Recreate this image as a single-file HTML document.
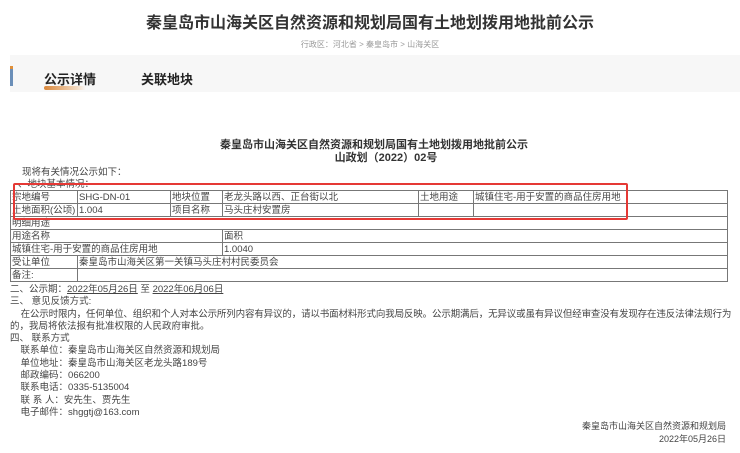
<!DOCTYPE html>
<html><head><meta charset="utf-8"><style>
*{margin:0;padding:0;box-sizing:border-box}
body{width:740px;height:453px;background:#fff;position:relative;overflow:hidden;font-family:"Liberation Sans","Noto Sans CJK SC",sans-serif;color:#333}
.a{position:absolute;white-space:nowrap}
.t{font-size:9.5px;line-height:12px;color:#444}
table{position:absolute;left:10px;top:190px;width:717px;border-collapse:collapse;font-size:9.5px;color:#444;table-layout:fixed}
td{border:1px solid #777;height:13px;line-height:11px;padding:0 1px;white-space:nowrap;overflow:hidden}
u{text-decoration:underline}
</style></head><body>
<div class="a" style="left:0;width:740px;text-align:center;top:9px;font-size:16px;font-weight:bold;color:#333">秦皇岛市山海关区自然资源和规划局国有土地划拨用地批前公示</div>
<div class="a" style="left:0;width:740px;text-align:center;top:39px;font-size:8px;color:#999">行政区：河北省 &gt; 秦皇岛市 &gt; 山海关区</div>
<div class="a" style="left:10px;top:55px;width:730px;height:37px;background:#f7f7f7"></div>
<div class="a" style="left:10px;top:66px;width:3px;height:20px;background:#6b8fb8"></div>
<div class="a" style="left:10px;top:66px;width:3px;height:3px;background:#e0903a"></div>
<div class="a" style="left:44px;top:69px;font-size:13px;font-weight:bold;color:#222">公示详情</div>
<div class="a" style="left:141px;top:69px;font-size:13px;font-weight:bold;color:#222">关联地块</div>
<div class="a" style="left:44px;top:86px;width:42px;height:4px;border-radius:2px;background:linear-gradient(90deg,#d9873a,#f3dcc5 80%,rgba(255,255,255,0))"></div>
<div class="a" style="left:0;width:740px;text-align:center;top:139px;font-size:11px;font-weight:bold;color:#333;line-height:13px;padding-left:8px">秦皇岛市山海关区自然资源和规划局国有土地划拨用地批前公示<br><span style="padding-left:24px">山政划（2022）02号</span></div>
<div class="a t" style="left:22px;top:167px">现将有关情况公示如下：</div>
<div class="a t" style="left:18px;top:179px">、地块基本情况：</div>
<table>
<colgroup><col style="width:67px"><col style="width:93px"><col style="width:52px"><col style="width:196px"><col style="width:55px"><col style="width:254px"></colgroup>
<tr><td>宗地编号</td><td>SHG-DN-01</td><td>地块位置</td><td>老龙头路以西、正台街以北</td><td>土地用途</td><td>城镇住宅-用于安置的商品住房用地</td></tr>
<tr><td>土地面积(公顷)</td><td>1.004</td><td>项目名称</td><td>马头庄村安置房</td><td></td><td></td></tr>
<tr><td colspan="6">明细用途</td></tr>
<tr><td colspan="3">用途名称</td><td colspan="3">面积</td></tr>
<tr><td colspan="3">城镇住宅-用于安置的商品住房用地</td><td colspan="3">1.0040</td></tr>
<tr><td>受让单位</td><td colspan="5">秦皇岛市山海关区第一关镇马头庄村村民委员会</td></tr>
<tr><td>备注:</td><td colspan="5"></td></tr>
</table>
<div class="a" style="left:13px;top:183px;width:615px;height:37px;border:2px solid #e53935;border-radius:2px"></div>
<div class="a t" style="left:10px;top:284px;line-height:12.3px">二、公示期：<u>2022年05月26日</u> 至 <u>2022年06月06日</u><br>三、 意见反馈方式:<br>&nbsp;&nbsp;&nbsp;&nbsp;<span style="letter-spacing:-0.15px">在公示时限内，任何单位、组织和个人对本公示所列内容有异议的，请以书面材料形式向我局反映。公示期满后，无异议或虽有异议但经审查没有发现存在违反法律法规行为</span><br>的，我局将依法报有批准权限的人民政府审批。<br>四、 联系方式<br>&nbsp;&nbsp;&nbsp;&nbsp;联系单位：秦皇岛市山海关区自然资源和规划局<br>&nbsp;&nbsp;&nbsp;&nbsp;单位地址：秦皇岛市山海关区老龙头路189号<br>&nbsp;&nbsp;&nbsp;&nbsp;邮政编码：066200<br>&nbsp;&nbsp;&nbsp;&nbsp;联系电话：0335-5135004<br>&nbsp;&nbsp;&nbsp;&nbsp;联 系 人：安先生、贾先生<br>&nbsp;&nbsp;&nbsp;&nbsp;电子邮件：shggtj@163.com</div>
<div class="a t" style="right:14px;top:420px;text-align:right;line-height:12.5px;font-size:9px">秦皇岛市山海关区自然资源和规划局<br>2022年05月26日</div>
</body></html>
